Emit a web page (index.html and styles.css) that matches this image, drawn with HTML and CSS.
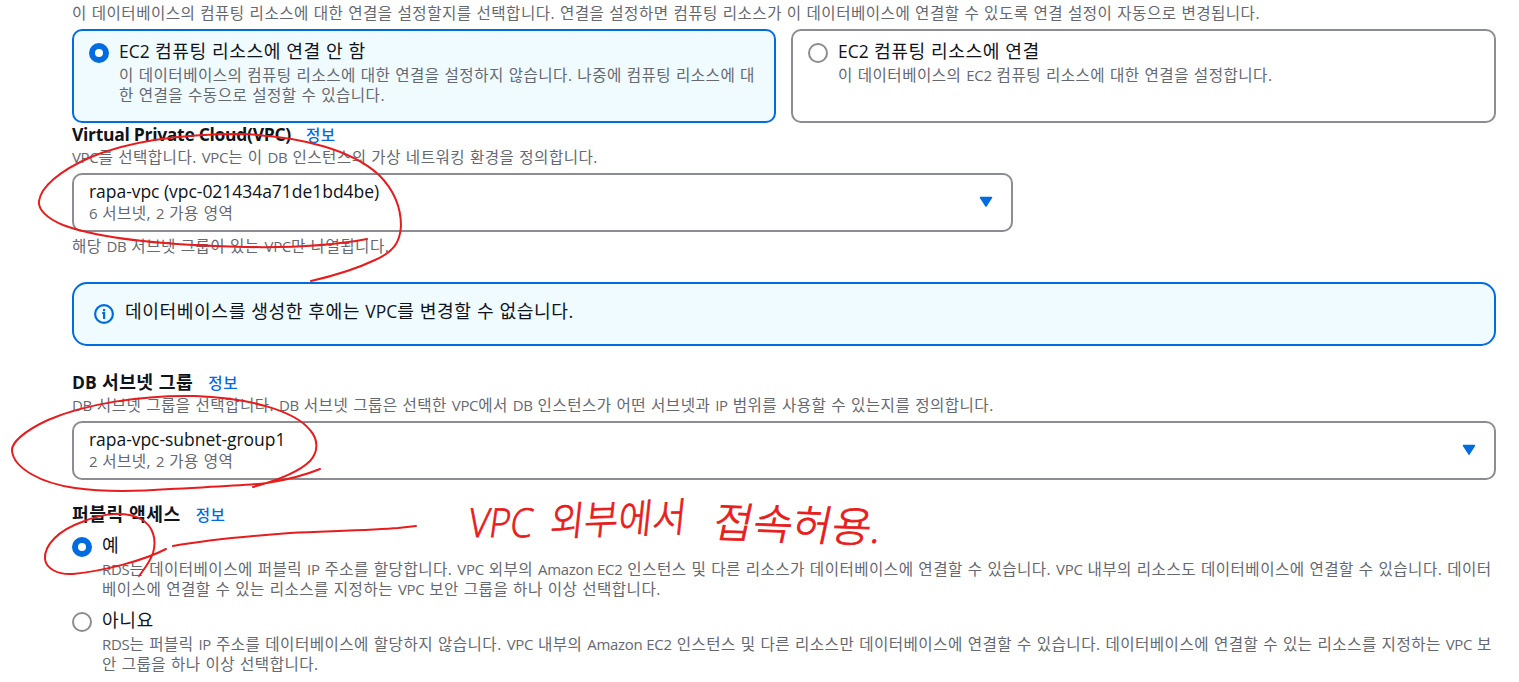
FILE: index.html
```html
<!DOCTYPE html>
<html lang="ko">
<head>
    <meta charset="UTF-8">
    <meta name="viewport" content="width=device-width, initial-scale=1.0">
    <title>데이터베이스 생성 - 연결</title>
    <link rel="stylesheet" href="styles.css">
</head>

<body>
    <main class="connectivity">
        <p class="desc intro">이 데이터베이스의 컴퓨팅 리소스에 대한 연결을 설정할지를 선택합니다. 연결을 설정하면 컴퓨팅 리소스가 이 데이터베이스에 연결할 수 있도록 연결 설정이 자동으로 변경됩니다.</p>

        <div class="tiles">
            <div class="tile selected">
                <span class="radio checked"></span>
                <div>
                    <div class="label"><span class="en">EC2</span> 컴퓨팅 리소스에 연결 안 함</div>
                    <p class="desc">이 데이터베이스의 컴퓨팅 리소스에 대한 연결을 설정하지 않습니다. 나중에 컴퓨팅 리소스에 대<br>한 연결을 수동으로 설정할 수 있습니다.</p>
                </div>
            </div>
            <div class="tile">
                <span class="radio"></span>
                <div>
                    <div class="label"><span class="en">EC2</span> 컴퓨팅 리소스에 연결</div>
                    <p class="desc">이 데이터베이스의 <span class="en">EC2</span> 컴퓨팅 리소스에 대한 연결을 설정합니다.</p>
                </div>
            </div>
        </div>

        <section class="field vpc">
            <h3><span class="latin">Virtual Private Cloud(VPC)</span> <a class="info">정보</a></h3>
            <p class="desc"><span class="en">VPC</span>를 선택합니다. <span class="en">VPC</span>는 이 <span class="en">DB</span> 인스턴스의 가상 네트워킹 환경을 정의합니다.</p>
            <div class="select narrow">
                <div>
                    <div class="value">rapa-vpc (vpc-021434a71de1bd4be)</div>
                    <div class="desc"><span class="en">6</span> 서브넷, <span class="en">2</span> 가용 영역</div>
                </div>
                <svg class="caret" viewBox="0 0 14 12"><path d="M1.5 1.5h11L7 10.2z"/></svg>
            </div>
            <p class="desc constraint">해당 <span class="en">DB</span> 서브넷 그룹이 있는 <span class="en">VPC</span>만 나열됩니다.</p>
        </section>

        <div class="alert">
            <svg class="alert-icon" viewBox="0 0 20 20">
                <circle cx="10" cy="10" r="8.9"/>
                <path d="M8.2 9h1.9v6M10.1 5v2.3"/>
            </svg>
            <span class="alert-text">데이터베이스를 생성한 후에는 <span class="en">VPC</span>를 변경할 수 없습니다.</span>
        </div>

        <section class="field subnet">
            <h3><span><span class="en">DB</span> 서브넷 그룹</span> <a class="info">정보</a></h3>
            <p class="desc"><span class="en">DB</span> 서브넷 그룹을 선택합니다. <span class="en">DB</span> 서브넷 그룹은 선택한 <span class="en">VPC</span>에서 <span class="en">DB</span> 인스턴스가 어떤 서브넷과 <span class="en">IP</span> 범위를 사용할 수 있는지를 정의합니다.</p>
            <div class="select">
                <div>
                    <div class="value">rapa-vpc-subnet-group1</div>
                    <div class="desc"><span class="en">2</span> 서브넷, <span class="en">2</span> 가용 영역</div>
                </div>
                <svg class="caret" viewBox="0 0 14 12"><path d="M1.5 1.5h11L7 10.2z"/></svg>
            </div>
        </section>

        <section class="field access">
            <h3><span>퍼블릭 액세스</span> <a class="info">정보</a></h3>
            <div class="option">
                <span class="radio checked"></span>
                <div>
                    <div class="label">예</div>
                    <p class="desc"><span class="en">RDS</span>는 데이터베이스에 퍼블릭 <span class="en">IP</span> 주소를 할당합니다. <span class="en">VPC</span> 외부의 <span class="en">Amazon EC2</span> 인스턴스 및 다른 리소스가 데이터베이스에 연결할 수 있습니다. <span class="en">VPC</span> 내부의 리소스도 데이터베이스에 연결할 수 있습니다. 데이터<br>베이스에 연결할 수 있는 리소스를 지정하는 <span class="en">VPC</span> 보안 그룹을 하나 이상 선택합니다.</p>
                </div>
            </div>
            <div class="option">
                <span class="radio"></span>
                <div>
                    <div class="label">아니요</div>
                    <p class="desc"><span class="en">RDS</span>는 퍼블릭 <span class="en">IP</span> 주소를 데이터베이스에 할당하지 않습니다. <span class="en">VPC</span> 내부의 <span class="en">Amazon EC2</span> 인스턴스 및 다른 리소스만 데이터베이스에 연결할 수 있습니다. 데이터베이스에 연결할 수 있는 리소스를 지정하는 <span class="en">VPC</span> 보<br>안 그룹을 하나 이상 선택합니다.</p>
                </div>
            </div>
        </section>
    </main>

    <!-- red pen notes over the form -->
    <svg class="notes" viewBox="0 0 1519 682">
        <path d="M367 239C330 246 280 249 215 246C140 243 92 236 63 225C46 218 38 209 39 201C41 187 59 171 91 157C130 141 185 134 240 134C303 136 353 151 379 175C395 191 401 207 401 226C400 243 393 252 375 260C356 269 333 276 311 281"/>
        <path d="M253 487C275 481 299 472 310 461C319 451 318 439 310 430C295 411 250 398 195 396C140 395 85 404 48 420C24 431 11 443 12 451C14 468 40 483 75 488C103 492 130 492 170 489C205 487 243 486 267 483C286 480 303 476 320 469"/>
        <path d="M166 549C143 561 103 571 73 574C57 575 46 568 45 559C44 545 59 530 82 522C103 513 126 511 141 519C153 526 157 539 153 553C150 562 145 568 139 576"/>
        <path d="M173 546C207 540 250 536 290 533C335 531 375 530 398 528L416 526"/>
        <g class="handwriting">
            <text transform="translate(467 537) skewX(-8)" textLength="64" lengthAdjust="spacingAndGlyphs">VPC</text>
            <text transform="translate(549 536) rotate(-2) skewX(-8)" textLength="136" lengthAdjust="spacingAndGlyphs">외부에서</text>
            <text class="large" transform="translate(711 537) rotate(2) skewX(-10)" textLength="168" lengthAdjust="spacingAndGlyphs">접속허용.</text>
        </g>
    </svg>
</body>
</html>
```
FILE: styles.css
```css
* {
    box-sizing: border-box;
}

body {
    margin: 0;
    height: 682px;
    overflow: hidden;
    position: relative;
    background: #fff;
    color: #0f141a;
    font-family: "Open Sans", "Noto Sans CJK KR", sans-serif;
    font-size: 18.2px;
    line-height: 25px;
}

p, h3 {
    margin: 0;
}

.connectivity {
    width: 1424px;
    margin-left: 72px;
    padding-top: 3px;
    white-space: nowrap;
}

.desc {
    color: #656871;
    font-size: 15.6px;
    line-height: 20px;
    letter-spacing: 0.46px;
    word-spacing: 0.39px;
}

/* latin runs are a bit smaller than the hangul around them */
.en {
    font-size: 0.96em;
    line-height: 1;
    letter-spacing: 0;
}

.desc .en {
    letter-spacing: -0.3px;
}

.intro {
    margin-bottom: 6px;
}

.tiles {
    display: grid;
    grid-template-columns: 704px 705px;
    gap: 15px;
}

.tile {
    display: flex;
    gap: 10px;
    height: 94px;
    padding: 8px 15px;
    border: 2px solid #8c8c94;
    border-radius: 10px;
}

.tile.selected {
    background: #f0fbff;
    border-color: #006ce0;
}

.radio {
    flex: none;
    width: 20px;
    height: 20px;
    margin-top: 4px;
    border: 2px solid #8c8c94;
    border-radius: 50%;
    background: #fff;
}

.radio.checked {
    border: 6px solid #006ce0;
}

.label {
    height: 26px;
    letter-spacing: 0.52px;
}

h3 {
    display: flex;
    gap: 15px;
    height: 24px;
    font-size: 18.2px;
    font-weight: 700;
    line-height: 23px;
    letter-spacing: 0.5px;
}

.latin {
    font-size: 17.5px;
    letter-spacing: -0.3px;
}

.info {
    color: #006ce0;
    font-size: 15.6px;
    font-weight: 500;
    line-height: 25px;
}

.select {
    display: flex;
    align-items: center;
    justify-content: space-between;
    height: 59px;
    margin-top: 6px;
    padding: 0 18px 2px 15px;
    border: 2px solid #8c8c94;
    border-radius: 10px;
}

.select.narrow {
    width: 941px;
}

.value {
    font-size: 17.5px;
    line-height: 23px;
    letter-spacing: -0.04px;
}

.caret {
    width: 14px;
    height: 12px;
    margin-top: 1px;
    fill: #006ce0;
    stroke: #006ce0;
    stroke-width: 1.5;
    stroke-linejoin: round;
}

.constraint {
    margin-top: 4px;
}

.alert {
    display: flex;
    align-items: center;
    gap: 11px;
    height: 64px;
    margin-top: 26px;
    padding-left: 20px;
    border: 2px solid #006ce0;
    border-radius: 15px;
    background: #f0fbff;
}

.alert-text {
    padding-bottom: 5px;
    letter-spacing: 0.54px;
}

.alert-icon {
    width: 20px;
    height: 20px;
    fill: none;
    stroke: #006ce0;
    stroke-width: 2.2;
}

.subnet {
    margin-top: 25px;
}

.access {
    margin-top: 23px;
}

.option {
    display: flex;
    gap: 10px;
    margin-top: 6px;
}

.option + .option {
    margin-top: 9px;
}

.notes {
    position: absolute;
    top: 0;
    left: 0;
    width: 1519px;
    height: 682px;
    fill: none;
    stroke: #e81c1c;
    stroke-width: 2;
    stroke-linecap: round;
}

.handwriting {
    fill: #e81c1c;
    stroke-width: 0.8;
    font-size: 40px;
    font-weight: 300;
}

.handwriting .large {
    font-size: 42px;
}
```
